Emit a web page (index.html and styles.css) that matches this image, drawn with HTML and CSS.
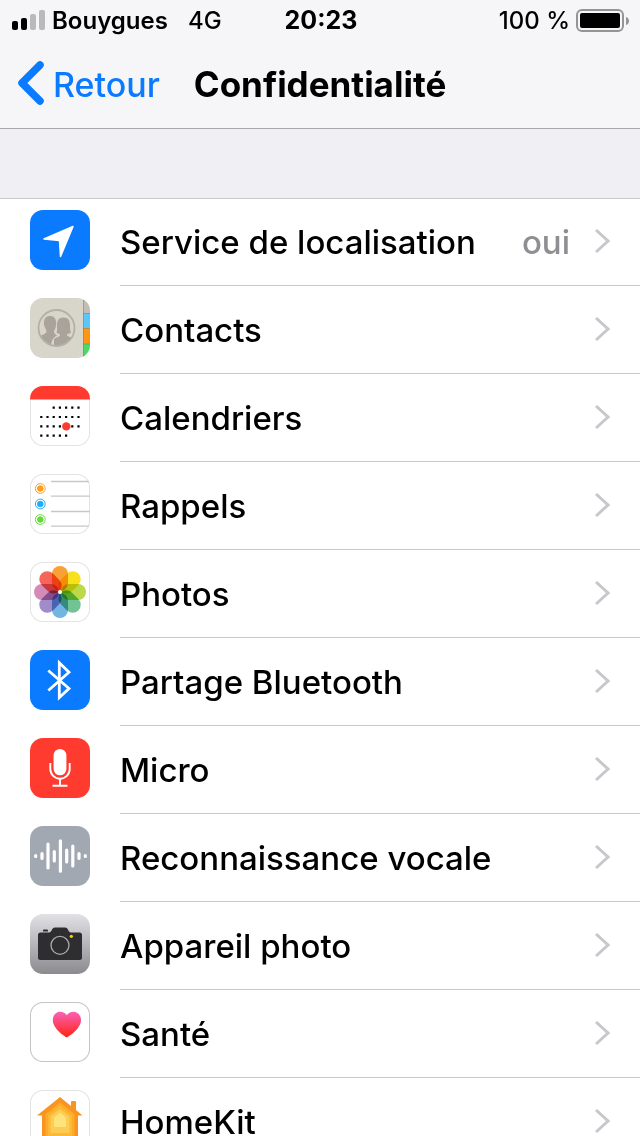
FILE: index.html
```html
<!DOCTYPE html>
<html lang="fr">
<head>
    <meta charset="UTF-8">
    <meta name="viewport" content="width=device-width, initial-scale=1.0">
    <title>Confidentialité</title>
    <link rel="stylesheet" href="styles.css">
</head>
<body>
<header class="header">
    <div class="status-bar">
        <div class="status-left">
            <svg class="signal" width="33" height="20" viewBox="0 0 33 20">
                <rect x="0" y="11" width="6" height="9" rx="2"/>
                <rect x="9" y="8" width="6" height="12" rx="2"/>
                <rect x="18" y="4" width="6" height="16" rx="2" fill="#bababc"/>
                <rect x="27" y="0" width="6" height="20" rx="2" fill="#bababc"/>
            </svg>
            <span class="carrier">Bouygues</span>
            <span class="network">4G</span>
        </div>
        <div class="time">20:23</div>
        <div class="status-right">
            <span class="percent">100 %</span>
            <svg width="54" height="24" viewBox="0 0 54 24">
                <rect x="1" y="2" width="46" height="21" rx="5" fill="none" stroke="#949496" stroke-width="2"/>
                <rect x="4" y="5" width="40" height="15" rx="2"/>
                <path d="M50 9c4 1 4 7 0 8z" fill="#949496"/>
            </svg>
        </div>
    </div>
    <nav class="nav-bar">
        <a class="back" href="#">
            <svg width="28" height="46" viewBox="0 0 28 46">
                <path d="M23 4 5 22l18 18" fill="none" stroke="#0a7aff" stroke-width="7.500" stroke-linecap="round" stroke-linejoin="round"/>
            </svg>
            <span>Retour</span>
        </a>
        <h1 class="title">Confidentialité</h1>
    </nav>
</header>
<main class="content">
    <div class="list">
        <a class="row" href="#">
            <svg class="icon" viewBox="0 0 60 60">
                <rect width="60" height="60" fill="#0a7aff"/>
                <path d="M14 29 43 16.500 30.500 46.500 29.500 30.500z" fill="#fff" stroke="#fff" stroke-width="1.500" stroke-linejoin="round"/>
            </svg>
            <span class="row-body">
                <span class="label">Service de localisation</span>
                <span class="value">oui</span>
                <svg class="chevron" viewBox="0 0 16 28"><path d="M2 2 14 13 2 24"/></svg>
            </span>
        </a>
        <a class="row" href="#">
            <svg class="icon" viewBox="0 0 60 60">
                <defs>
                    <clipPath id="contact"><circle cx="26.500" cy="30" r="17.500"/></clipPath>
                </defs>
                <rect width="60" height="60" fill="#d8d5cb"/>
                <rect x="53" width="7" height="15" fill="#c2beb5"/>
                <rect x="53" y="15" width="7" height="15" fill="#5bc6fa"/>
                <rect x="53" y="30" width="7" height="16" fill="#ff9511"/>
                <rect x="53" y="46" width="7" height="14" fill="#4cd964"/>
                <path d="M53 15.500h7M53 30.500h7M53 46h7M53.500 0v60" stroke="#7d7d70" stroke-opacity=".5"/>
                <g clip-path="url(#contact)" fill="#aaa39b">
                    <path d="M33.500 19.500c5 0 6.500 3.500 6.500 8 0 3 0 5 1 7-1 1.500-4 1-4 2.500 0 2 7 2.500 9 4.500v8H24V41c1.500-1.500 6-2 6-4 0-1.500-2.500-1-3.500-2.500 1-2.500.5-4.500.5-7 0-4.500 1.500-8 6.500-8z"/>
                    <path d="M20 17.500c5 0 7 4 6.500 9 0 3-1 4.500-2 6.500 0 3 1.500 3.500 3.500 4.500-4.500 2-6.500 5-6.500 11.500H7V38.500c2-1.500 9-2 9-5 0-2-2-4-2.500-7-.5-5 1.500-9 6.500-9z" stroke="#d8d5cb" stroke-width="1"/>
                </g>
                <circle cx="26.500" cy="30" r="18" fill="none" stroke="#b5afa5" stroke-width="1.800"/>
            </svg>
            <span class="row-body">
                <span class="label">Contacts</span>
                <svg class="chevron" viewBox="0 0 16 28"><path d="M2 2 14 13 2 24"/></svg>
            </span>
        </a>
        <a class="row" href="#">
            <svg class="icon bordered" viewBox="0 0 60 60">
                <rect width="60" height="13.500" fill="#ff3b30"/>
                <g stroke="#000" stroke-width="2.200" stroke-dasharray="2.200 4">
                    <path d="M22.600 21.700h28M10.200 31h40M10.200 40.300h40M10.200 49.700h28"/>
                </g>
                <circle cx="36.300" cy="40.400" r="4.200" fill="#ff3b30"/>
            </svg>
            <span class="row-body">
                <span class="label">Calendriers</span>
                <svg class="chevron" viewBox="0 0 16 28"><path d="M2 2 14 13 2 24"/></svg>
            </span>
        </a>
        <a class="row" href="#">
            <svg class="icon bordered" viewBox="0 0 60 60">
                <path d="M21 7.500h38M21 22.200h39M21 37.500h39M21 52.200h38" stroke="#c7c7cc" stroke-width="1.300"/>
                <g fill="#ff9d1c" stroke="#ff9d1c"><circle cx="10.300" cy="14.500" r="4.900" fill="none"/><circle cx="10.300" cy="14.500" r="2.800"/></g>
                <g fill="#1badf8" stroke="#1badf8"><circle cx="10.300" cy="30" r="4.900" fill="none"/><circle cx="10.300" cy="30" r="2.800"/></g>
                <g fill="#63da38" stroke="#63da38"><circle cx="10.300" cy="45.500" r="4.900" fill="none"/><circle cx="10.300" cy="45.500" r="2.800"/></g>
            </svg>
            <span class="row-body">
                <span class="label">Rappels</span>
                <svg class="chevron" viewBox="0 0 16 28"><path d="M2 2 14 13 2 24"/></svg>
            </span>
        </a>
        <a class="row" href="#">
            <svg class="icon bordered" viewBox="0 0 60 60">
                <g class="petals">
                    <rect x="22" y="4" width="16" height="25" rx="8" fill="#f9a136"/>
                    <rect x="22" y="4" width="16" height="25" rx="8" fill="#f8e11c" transform="rotate(45 30 30)"/>
                    <rect x="22" y="4" width="16" height="25" rx="8" fill="#bcd94a" transform="rotate(90 30 30)"/>
                    <rect x="22" y="4" width="16" height="25" rx="8" fill="#70c493" transform="rotate(135 30 30)"/>
                    <rect x="22" y="4" width="16" height="25" rx="8" fill="#73b4e2" transform="rotate(180 30 30)"/>
                    <rect x="22" y="4" width="16" height="25" rx="8" fill="#a08cc8" transform="rotate(225 30 30)"/>
                    <rect x="22" y="4" width="16" height="25" rx="8" fill="#d48bb8" transform="rotate(270 30 30)"/>
                    <rect x="22" y="4" width="16" height="25" rx="8" fill="#f5655a" transform="rotate(315 30 30)"/>
                </g>
                <circle cx="30" cy="30" r="2" fill="#fff"/>
            </svg>
            <span class="row-body">
                <span class="label">Photos</span>
                <svg class="chevron" viewBox="0 0 16 28"><path d="M2 2 14 13 2 24"/></svg>
            </span>
        </a>
        <a class="row" href="#">
            <svg class="icon" viewBox="0 0 60 60">
                <rect width="60" height="60" fill="#0a7aff"/>
                <path d="M18.300 20.500 39 38.500 29.300 47.500V12.800L39 22.300 18.300 40.500" fill="none" stroke="#fff" stroke-width="2.800"/>
            </svg>
            <span class="row-body">
                <span class="label">Partage Bluetooth</span>
                <svg class="chevron" viewBox="0 0 16 28"><path d="M2 2 14 13 2 24"/></svg>
            </span>
        </a>
        <a class="row" href="#">
            <svg class="icon" viewBox="0 0 60 60">
                <rect width="60" height="60" fill="#ff3b30"/>
                <rect x="23.600" y="11" width="12.800" height="26.300" rx="6.400" fill="#fff"/>
                <path d="M20.300 25v6a9.700 9.700 0 0 0 19.400 0v-6M30 41v7M22.500 47.800h15" fill="none" stroke="#fff" stroke-width="1.900"/>
            </svg>
            <span class="row-body">
                <span class="label">Micro</span>
                <svg class="chevron" viewBox="0 0 16 28"><path d="M2 2 14 13 2 24"/></svg>
            </span>
        </a>
        <a class="row" href="#">
            <svg class="icon" viewBox="0 0 60 60">
                <rect width="60" height="60" fill="#a2a8b2"/>
                <path d="M5.700 29.600v.8M12 27.500v5M18 18v24M24.300 25.500v9.500M30.400 14.800v30.400M36.700 24v12M42.800 20v20M49 27.500v5M55.300 29.600v.8" stroke="#fff" stroke-width="3.200" stroke-linecap="round"/>
            </svg>
            <span class="row-body">
                <span class="label">Reconnaissance vocale</span>
                <svg class="chevron" viewBox="0 0 16 28"><path d="M2 2 14 13 2 24"/></svg>
            </span>
        </a>
        <a class="row" href="#">
            <svg class="icon" viewBox="0 0 60 60">
                <defs>
                    <linearGradient id="steel" x2="0" y2="1">
                        <stop offset="0" stop-color="#e2e2e6"/>
                        <stop offset="1" stop-color="#8b8a8f"/>
                    </linearGradient>
                </defs>
                <rect width="60" height="60" fill="url(#steel)"/>
                <path d="M13 17.500v-1q0-1 1-1h3q1 0 1 1v1z" fill="#2e2e30"/>
                <path d="M10.500 18.500H19c3 0 2.500-5 6-5h10c3.500 0 3 5 6 5h8.500q2.500 0 2.500 2.500v22.500q0 2.500-2.500 2.500h-39Q8 46 8 43.500V21q0-2.500 2.500-2.500z" fill="#2e2e30"/>
                <circle cx="30" cy="31.300" r="9" fill="none" stroke="#a9a9ac" stroke-width="1.300"/>
                <circle cx="41.300" cy="22.300" r="1.600" fill="#ffcc00"/>
            </svg>
            <span class="row-body">
                <span class="label">Appareil photo</span>
                <svg class="chevron" viewBox="0 0 16 28"><path d="M2 2 14 13 2 24"/></svg>
            </span>
        </a>
        <a class="row" href="#">
            <svg class="icon bordered dark" viewBox="0 0 60 60">
                <defs>
                    <linearGradient id="pink" x2="0" y2="1">
                        <stop offset="0" stop-color="#fb62b8"/>
                        <stop offset="1" stop-color="#ff2412"/>
                    </linearGradient>
                </defs>
                <path d="M36.800 35.300c-1-.2-14-8-14-17.300 0-5 3.500-8.300 7.300-8.300 3 0 5.400 1.300 6.700 3.600 1.300-2.300 3.700-3.600 6.700-3.600 3.800 0 7.500 3.300 7.500 8.300 0 9.300-13.200 17.100-14.200 17.300z" fill="url(#pink)"/>
            </svg>
            <span class="row-body">
                <span class="label">Santé</span>
                <svg class="chevron" viewBox="0 0 16 28"><path d="M2 2 14 13 2 24"/></svg>
            </span>
        </a>
        <a class="row" href="#">
            <svg class="icon bordered" viewBox="0 0 60 60">
                <path d="M30 7 41 16v-4q0-1 1-1h3q1 0 1 1v8l6.500 5.500H48V53H12V25.500H7z" fill="#f99421"/>
                <path d="M30 12.500 44.500 24v26h-29V24z" fill="#fdab2b"/>
                <path d="M30 15.500 42 25v22H18V25z" fill="#fdb934"/>
                <path d="M30 19 39.500 26.500V43h-19V26.500z" fill="#fdcc55"/>
                <path d="M30 22.500 36 27.500V37H24v-9.500z" fill="#fee27a"/>
            </svg>
            <span class="row-body">
                <span class="label">HomeKit</span>
                <svg class="chevron" viewBox="0 0 16 28"><path d="M2 2 14 13 2 24"/></svg>
            </span>
        </a>
    </div>
</main>
</body>
</html>
```
FILE: styles.css
```css
* {
    margin: 0;
    padding: 0;
    box-sizing: border-box;
}

body {
    display: flex;
    flex-direction: column;
    height: 100vh;
    overflow: hidden;
    background: #efeff4;
    color: #000;
    font-family: Inter, "Liberation Sans", sans-serif;
}

a {
    color: inherit;
    text-decoration: none;
}

.header {
    background: #f6f6f8;
    border-bottom: 1px solid #a7a7ab;
}

/* Status bar */
.status-bar {
    display: grid;
    grid-template-columns: 1fr auto 1fr;
    align-items: center;
    height: 40px;
    padding: 0 10px 0 12px;
    font-size: 24px;
    font-weight: 500;
}

.status-left {
    display: flex;
    align-items: center;
}

.carrier {
    margin: 0 20px 0 7px;
    font-weight: 600;
}

.time {
    font-size: 25px;
    font-weight: 700;
}

.status-right {
    display: flex;
    align-items: center;
    justify-content: flex-end;
    gap: 6px;
}

/* Navigation bar */
.nav-bar {
    display: grid;
    grid-template-columns: 1fr auto 1fr;
    align-items: center;
    height: 88px;
    padding: 0 17px;
}

.back {
    display: flex;
    align-items: center;
    gap: 8px;
    color: #0a7aff;
    font-size: 34px;
    font-weight: 500;
}

.title {
    font-size: 35px;
    font-weight: 700;
}

/* Settings list */
.content {
    flex: 1;
    min-height: 0;
    padding-top: 69px;
    overflow-y: auto;
    scrollbar-width: none;
}

.list {
    background: #fff;
    box-shadow: inset 0 1px #c8c7cc;
}

.row {
    display: flex;
    gap: 30px;
    height: 88px;
    padding-left: 30px;
}

.icon {
    flex: none;
    width: 60px;
    height: 60px;
    margin-top: 12px;
    border-radius: 13px;
}

.bordered {
    background: #fff;
    box-shadow: inset 0 0 0 1px #e3e3e5;
}

.dark {
    box-shadow: inset 0 0 0 1px #c4c4c6;
}

.petals {
    isolation: isolate;
}

.petals rect {
    mix-blend-mode: multiply;
}

.row-body {
    display: flex;
    flex: 1;
    align-items: center;
    padding-right: 30px;
    border-bottom: 1px solid #c8c7cc;
    font-size: 33px;
    font-weight: 550;
}

.label {
    flex: 1;
}

.value {
    margin-right: 24px;
    color: #8e8e93;
}

.chevron {
    width: 16px;
    height: 28px;
    fill: none;
    stroke: #c7c7cc;
    stroke-width: 3;
}
```
